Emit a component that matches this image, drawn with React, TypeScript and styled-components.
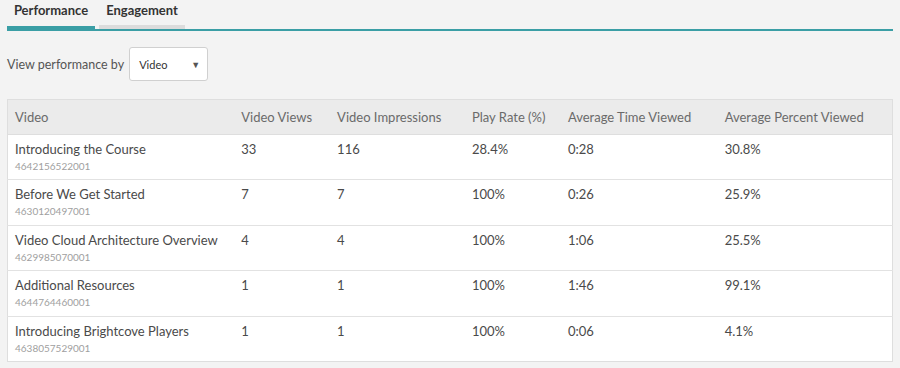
import React from 'react';
import styled, { createGlobalStyle } from 'styled-components';

const GlobalStyle = createGlobalStyle`
  html, body {
    margin: 0;
    padding: 0;
    background: #f3f3f3;
  }
  body {
    font-family: Lato, "Liberation Sans", sans-serif;
    color: #444;
  }
`;

const Page = styled.div`
  width: 900px;
  height: 368px;
  padding: 0 7px;
  box-sizing: border-box;
  background: #f3f3f3;
  overflow: hidden;
`;

const Tabs = styled.div`
  display: flex;
  align-items: flex-end;
  gap: 4px;
  border-bottom: 2px solid #3a9ea5;
`;

const Tab = styled.div<{ $active?: boolean }>`
  height: 29px;
  display: flex;
  align-items: flex-start;
  justify-content: center;
  padding: 2px 8px 0;
  box-sizing: border-box;
  font-size: 13px;
  font-weight: 700;
  color: #333;
  border-bottom: ${(p) => (p.$active ? '3px solid #3a9ea5' : '4px solid #dcdcdc')};
  width: ${(p) => (p.$active ? '88px' : '86px')};
`;

const Filter = styled.div`
  display: flex;
  align-items: center;
  gap: 5px;
  margin-top: 16px;
  font-size: 12.5px;
  color: #555;
`;

const SelectBox = styled.div`
  width: 79px;
  height: 34px;
  box-sizing: border-box;
  background: #fff;
  border: 1px solid #d0d0d0;
  border-radius: 3px;
  display: flex;
  align-items: center;
  justify-content: space-between;
  padding: 0 7px 0 9px;
  font-size: 11px;
  color: #333;
`;

const Caret = styled.span`
  font-size: 9px;
  color: #555;
`;

const Table = styled.table`
  margin-top: 18px;
  width: 886px;
  border-collapse: collapse;
  background: #fff;
  border: 1px solid #dedede;
  font-size: 13px;
`;

const HeadCell = styled.th<{ $w: number }>`
  width: ${(p) => p.$w}px;
  height: 35px;
  padding: 0 0 0 7px;
  box-sizing: border-box;
  text-align: left;
  font-weight: 400;
  color: #6a6a6a;
  background: #ebebeb;
  border-bottom: 1px solid #dedede;
`;

const Row = styled.tr`
  border-bottom: 1px solid #e2e2e2;
  &:last-child {
    border-bottom: none;
  }
`;

const Cell = styled.td`
  height: 45.4px;
  padding: 6px 0 0 7px;
  box-sizing: border-box;
  vertical-align: top;
  color: #4a4a4a;
`;

const Title = styled.div`
  line-height: 16px;
`;

const Id = styled.div`
  margin-top: 2px;
  font-size: 10px;
  color: #a0a0a0;
  line-height: 14px;
`;

const columns = [
  { label: 'Video', w: 227 },
  { label: 'Video Views', w: 96 },
  { label: 'Video Impressions', w: 135 },
  { label: 'Play Rate (%)', w: 96 },
  { label: 'Average Time Viewed', w: 157 },
  { label: 'Average Percent Viewed', w: 175 },
];

const rows = [
  { title: 'Introducing the Course', id: '4642156522001', views: '33', imp: '116', rate: '28.4%', time: '0:28', pct: '30.8%' },
  { title: 'Before We Get Started', id: '4630120497001', views: '7', imp: '7', rate: '100%', time: '0:26', pct: '25.9%' },
  { title: 'Video Cloud Architecture Overview', id: '4629985070001', views: '4', imp: '4', rate: '100%', time: '1:06', pct: '25.5%' },
  { title: 'Additional Resources', id: '4644764460001', views: '1', imp: '1', rate: '100%', time: '1:46', pct: '99.1%' },
  { title: 'Introducing Brightcove Players', id: '4638057529001', views: '1', imp: '1', rate: '100%', time: '0:06', pct: '4.1%' },
];

export default function App() {
  return (
    <Page>
      <GlobalStyle />
      <Tabs>
        <Tab $active>Performance</Tab>
        <Tab>Engagement</Tab>
      </Tabs>
      <Filter>
        <span>View performance by</span>
        <SelectBox>
          <span>Video</span>
          <Caret>▼</Caret>
        </SelectBox>
      </Filter>
      <Table>
        <thead>
          <tr>
            {columns.map((c) => (
              <HeadCell key={c.label} $w={c.w}>
                {c.label}
              </HeadCell>
            ))}
          </tr>
        </thead>
        <tbody>
          {rows.map((r) => (
            <Row key={r.id}>
              <Cell>
                <Title>{r.title}</Title>
                <Id>{r.id}</Id>
              </Cell>
              <Cell>{r.views}</Cell>
              <Cell>{r.imp}</Cell>
              <Cell>{r.rate}</Cell>
              <Cell>{r.time}</Cell>
              <Cell>{r.pct}</Cell>
            </Row>
          ))}
        </tbody>
      </Table>
    </Page>
  );
}
